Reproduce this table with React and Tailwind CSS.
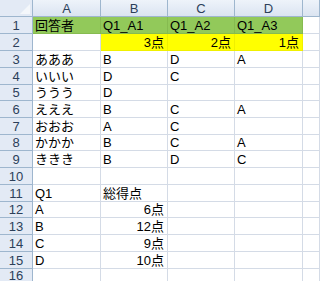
import React from 'react';

const cols = ['A', 'B', 'C', 'D', ''];
const heights = [17, 17, 17, 17, 16, 17, 17, 16, 17, 17, 17, 16, 17, 17, 17];

// each row: [A, B, C, D], with optional fill per cell
const rows = [
  { cells: ['回答者', 'Q1_A1', 'Q1_A2', 'Q1_A3'], fill: ['g', 'g', 'g', 'g'] },
  { cells: ['', '3点', '2点', '1点'], fill: ['', 'y', 'y', 'y'], right: [false, true, true, true] },
  { cells: ['あああ', 'B', 'D', 'A'] },
  { cells: ['いいい', 'D', 'C', ''] },
  { cells: ['ううう', 'D', '', ''] },
  { cells: ['えええ', 'B', 'C', 'A'] },
  { cells: ['おおお', 'A', 'C', ''] },
  { cells: ['かかか', 'B', 'C', 'A'] },
  { cells: ['ききき', 'B', 'D', 'C'] },
  { cells: ['', '', '', ''] },
  { cells: ['Q1', '総得点', '', ''] },
  { cells: ['A', '6点', '', ''], right: [false, true, false, false] },
  { cells: ['B', '12点', '', ''], right: [false, true, false, false] },
  { cells: ['C', '9点', '', ''], right: [false, true, false, false] },
  { cells: ['D', '10点', '', ''], right: [false, true, false, false] },
];

const grid = 'grid grid-cols-[33px_68px_67px_67px_68px_1fr]';

const Cell = ({ text, fill, right }) => {
  const bg =
    fill === 'g'
      ? 'bg-[#92c95a] border-[#86bb50]'
      : fill === 'y'
      ? 'bg-[#ffff00] border-[#f0f000]'
      : 'bg-white border-[#d4dbe6]';
  return (
    <div
      className={`flex items-end pb-[1px] border-r border-b overflow-hidden whitespace-nowrap ${bg} ${
        right ? 'justify-end pr-[3px]' : 'pl-[2px]'
      }`}
    >
      {text}
    </div>
  );
};

export default function App() {
  return (
    <div
      className="w-[320px] h-[281px] overflow-hidden bg-white text-[13px] leading-none text-black"
      style={{ fontFamily: '"Liberation Sans", "Noto Sans CJK JP", sans-serif' }}
    >
      <div className={`${grid} h-[17px]`}>
        <div className="relative bg-[#e3eaf5] border-r border-b border-[#9eb6ce]">
          <svg className="absolute right-[2px] bottom-[2px]" width="10" height="10" viewBox="0 0 10 10">
            <polygon points="10,0 10,10 0,10" fill="#f4f7fb" />
          </svg>
        </div>
        {cols.map((c, i) => (
          <div
            key={i}
            className="flex items-center justify-center bg-gradient-to-b from-[#eef3fa] to-[#dbe4f1] border-r border-b border-[#9eb6ce] text-[#2c3f5a]"
          >
            {c}
          </div>
        ))}
      </div>
      {rows.map((r, ri) => (
        <div key={ri} className={grid} style={{ height: heights[ri] }}>
          <div className="flex items-center justify-center bg-[#e3eaf5] border-r border-b border-[#9eb6ce] text-[#2c3f5a]">
            {ri + 1}
          </div>
          {r.cells.map((t, ci) => (
            <Cell
              key={ci}
              text={t}
              fill={r.fill ? r.fill[ci] : ''}
              right={r.right ? r.right[ci] : false}
            />
          ))}
          <Cell text="" />
        </div>
      ))}
      <div className={`${grid} h-[12px]`}>
        <div className="flex items-start justify-center bg-[#e3eaf5] border-r border-[#9eb6ce] text-[#2c3f5a]">16</div>
        {cols.map((c, i) => (
          <div key={i} className="border-r border-[#d4dbe6]" />
        ))}
      </div>
    </div>
  );
}
